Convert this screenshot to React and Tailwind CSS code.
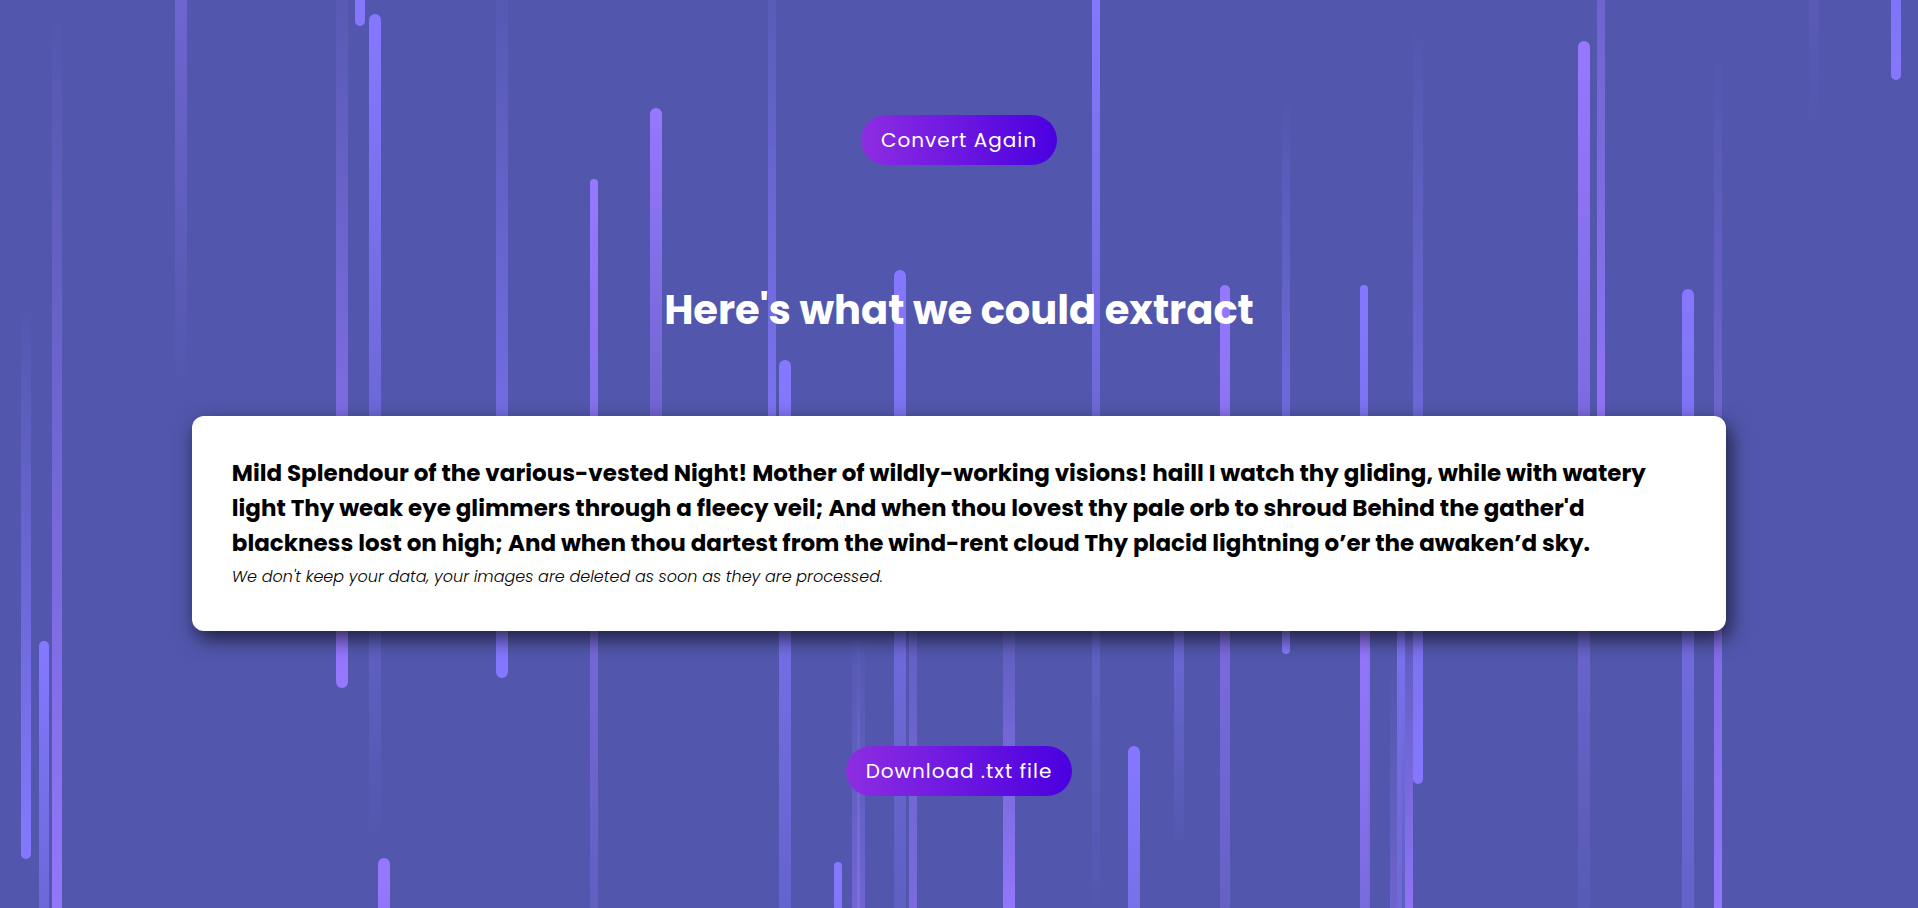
const BLUE = '133,120,255';
const PURPLE = '150,120,255';

// Each streak runs from its faded tail to its bright, rounded head.
const streaks = [
  { x: 21, w: 10, tail: 300, head: 859, rgb: BLUE },
  { x: 39, w: 10, tail: 1200, head: 641, rgb: BLUE },
  { x: 52, w: 10, tail: 10, head: 950, rgb: PURPLE },
  { x: 175, w: 12, tail: 385, head: -520, rgb: PURPLE },
  { x: 336, w: 12, tail: -60, head: 688, rgb: PURPLE },
  { x: 355, w: 10, tail: -700, head: 26, rgb: BLUE },
  { x: 369, w: 12, tail: 850, head: 14, rgb: BLUE },
  { x: 378, w: 12, tail: 1700, head: 858, rgb: PURPLE },
  { x: 496, w: 12, tail: -50, head: 678, rgb: BLUE },
  { x: 590, w: 8, tail: 1140, head: 179, rgb: PURPLE },
  { x: 650, w: 12, tail: 640, head: 108, rgb: PURPLE },
  { x: 768, w: 8, tail: -90, head: 527, rgb: BLUE },
  { x: 779, w: 12, tail: 1240, head: 360, rgb: BLUE },
  { x: 834, w: 8, tail: 1500, head: 862, rgb: BLUE },
  { x: 852, w: 8, tail: 620, head: 1250, rgb: PURPLE },
  { x: 857, w: 8, tail: 630, head: 1280, rgb: PURPLE },
  { x: 894, w: 12, tail: 1120, head: 270, rgb: BLUE },
  { x: 909, w: 8, tail: 430, head: 1220, rgb: PURPLE },
  { x: 1003, w: 12, tail: 560, head: 925, rgb: PURPLE },
  { x: 1092, w: 8, tail: 920, head: -30, rgb: BLUE },
  { x: 1128, w: 12, tail: 1400, head: 746, rgb: BLUE },
  { x: 1174, w: 10, tail: 850, head: 425, rgb: BLUE },
  { x: 1220, w: 10, tail: 1165, head: 285, rgb: PURPLE },
  { x: 1282, w: 8, tail: 95, head: 654, rgb: BLUE },
  { x: 1360, w: 8, tail: 1000, head: 285, rgb: BLUE },
  { x: 1360, w: 10, tail: 1250, head: 590, rgb: PURPLE },
  { x: 1390, w: 12, tail: 670, head: 1280, rgb: PURPLE },
  { x: 1397, w: 8, tail: 1010, head: 560, rgb: BLUE },
  { x: 1405, w: 8, tail: 560, head: 955, rgb: PURPLE },
  { x: 1413, w: 10, tail: 20, head: 784, rgb: BLUE },
  { x: 1578, w: 12, tail: 1000, head: 41, rgb: PURPLE },
  { x: 1597, w: 8, tail: -330, head: 500, rgb: PURPLE },
  { x: 1682, w: 12, tail: 1220, head: 289, rgb: BLUE },
  { x: 1714, w: 8, tail: 50, head: 945, rgb: PURPLE },
  { x: 1809, w: 10, tail: 140, head: -1200, rgb: PURPLE },
  { x: 1891, w: 10, tail: -600, head: 80, rgb: BLUE },
];

function Streaks() {
  return (
    <div aria-hidden="true" className="absolute inset-0 -z-10 overflow-hidden">
      {streaks.map((s, i) => (
        <span
          key={i}
          className="absolute rounded-full"
          style={{
            left: s.x,
            top: Math.min(s.tail, s.head),
            width: s.w,
            height: Math.abs(s.head - s.tail),
            backgroundImage: `linear-gradient(${s.head > s.tail ? 'to bottom' : 'to top'}, rgba(${s.rgb},0), rgb(${s.rgb}))`,
          }}
        />
      ))}
    </div>
  );
}

function PillButton({ children }) {
  return (
    <button
      type="button"
      className="cursor-pointer rounded-full bg-linear-to-r/srgb from-[#8e2de2] to-[#4a00e0] px-5 text-xl leading-[50px] tracking-wider text-white"
    >
      {children}
    </button>
  );
}

export default function App() {
  return (
    <div className="relative isolate flex min-h-screen flex-col items-center overflow-hidden bg-[#5257ad] pt-[115px] pb-[112px] font-[Poppins,Inter,sans-serif]">
      <Streaks />
      <PillButton>Convert Again</PillButton>
      <h1 className="mt-[115px] text-center text-[40px] leading-[60px] font-bold text-white">
        Here's what we could extract
      </h1>
      <main className="mt-[76px] w-4/5 rounded-xl bg-white px-10 pt-10 pb-[38px] text-black shadow-[4px_8px_20px_rgba(0,0,0,0.65)]">
        <p className="text-[23px] leading-[35px] font-bold">
          Mild Splendour of the various-vested Night! Mother of wildly-working visions! haill I watch thy gliding, while with watery
          light Thy weak eye glimmers through a fleecy veil; And when thou lovest thy pale orb to shroud Behind the gather'd
          blackness lost on high; And when thou dartest from the wind-rent cloud Thy placid lightning o’er the awaken’d sky.
        </p>
        <p className="text-base leading-8 font-light italic">
          We don't keep your data, your images are deleted as soon as they are processed.
        </p>
      </main>
      <div className="mt-[115px] flex">
        <PillButton>Download .txt file</PillButton>
      </div>
    </div>
  );
}
